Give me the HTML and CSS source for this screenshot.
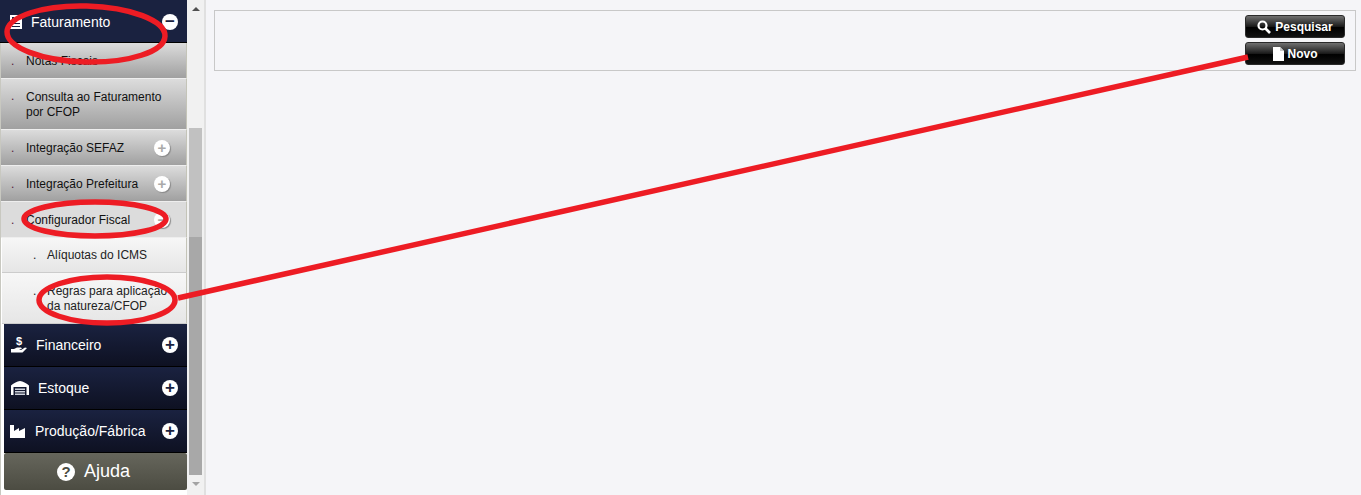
FILE: index.html
```html
<!DOCTYPE html>
<html lang="en">
<head>
  <meta charset="UTF-8" />
  <title>Faturamento</title>
  <link rel="stylesheet" href="styles.css">
</head>
<body>
  <aside class="sidebar">
    <nav class="menu">
      <a class="head head-first">
        <svg class="head-icon" width="12" height="14" viewBox="0 0 12 14"><path fill="#fff" d="M0 0h9l3 3v11H0z"/><path fill="#1a2240" d="M2 2h2v2H2zM5 2h2v2H5zM2 5h2v2H2zM5 5h2v2H5zM2 8h8v1H2zM2 11h8v1H2z"/></svg>
        <span class="head-text">Faturamento</span>
        <span class="toggle">&minus;</span>
      </a>
      <a class="sub">Notas Fiscais</a>
      <a class="sub sub-tall">Consulta ao Faturamento<br>por CFOP</a>
      <a class="sub">Integração SEFAZ<span class="toggle-sm">+</span></a>
      <a class="sub">Integração Prefeitura<span class="toggle-sm">+</span></a>
      <a class="sub sub-open">Configurador Fiscal<span class="toggle-sm">&minus;</span></a>
      <a class="leaf">Alíquotas do ICMS</a>
      <a class="leaf leaf-tall">Regras para aplicação<br>da natureza/CFOP</a>
      <a class="head">
        <svg class="head-icon" width="16" height="18" viewBox="0 0 16 18"><text x="5" y="9" fill="#fff" font-size="11" font-weight="bold" font-family="Liberation Sans">$</text><path fill="#fff" d="M0 13h3l3-1.500h4l1 1-3 1.500h2l4-2.500 2 .5-4.500 4.500H3l-3 0z"/></svg>
        <span class="head-text">Financeiro</span>
        <span class="toggle">+</span>
      </a>
      <a class="head">
        <svg class="head-icon" width="18" height="14" viewBox="0 0 18 14"><path fill="#fff" d="M0 4.500C3 2 6 .5 9 0c3 .5 6 2 9 4.500V14h-2.500V6h-13v8H0z"/><path fill="#cfd3dc" d="M4 7.500h10v1.500H4zM4 10h10v1.500H4zM4 12.500h10V14H4z"/></svg>
        <span class="head-text">Estoque</span>
        <span class="toggle">+</span>
      </a>
      <a class="head">
        <svg class="head-icon head-icon-left" width="15" height="13" viewBox="0 0 15 13"><path fill="#fff" d="M0 0h4v6l5-3v3l6-3v10H0z"/></svg>
        <span class="head-text">Produção/Fábrica</span>
        <span class="toggle">+</span>
      </a>
      <a class="help">
        <span class="help-icon">?</span>
        <span>Ajuda</span>
      </a>
    </nav>
    <div class="scrollbar">
      <span class="arrow arrow-up"></span>
      <span class="thumb"></span>
      <span class="arrow arrow-down"></span>
    </div>
  </aside>

  <main class="content">
    <section class="filter-box">
      <button class="btn">
        <svg width="14" height="14" viewBox="0 0 14 14"><circle cx="5.500" cy="5.500" r="4" fill="none" stroke="#fff" stroke-width="2.200"/><path d="M8.500 8.500L13 13" stroke="#fff" stroke-width="2.600"/></svg>
        Pesquisar
      </button>
      <button class="btn">
        <svg width="11" height="14" viewBox="0 0 11 14"><path fill="#fff" d="M0 0h7l4 4v10H0z"/><path fill="#c8c8c8" d="M7 0l4 4H7z"/></svg>
        Novo
      </button>
    </section>
  </main>

  <!-- marcacoes em vermelho por cima da tela -->
  <svg class="marks" width="1361" height="495" viewBox="0 0 1361 495">
    <g fill="none" stroke="#ed1c24" stroke-width="5.500">
      <ellipse cx="86" cy="34" rx="79" ry="28" transform="rotate(1.500 86 34)"/>
      <ellipse cx="95" cy="219" rx="71" ry="17"/>
      <ellipse cx="107" cy="300" rx="68" ry="23"/>
      <path d="M178 298L1248 57"/>
    </g>
  </svg>
</body>
</html>
```

FILE: styles.css
```css
* {
  box-sizing: border-box;
}

body {
  margin: 0;
  height: 495px;
  overflow: hidden;
  display: flex;
  background: #f5f5f8;
  font-family: 'Liberation Sans', Arial, sans-serif;
}

.sidebar {
  width: 206px;
  height: 495px;
  flex: none;
  display: flex;
  background: #fff;
  border-right: 2px solid #e0e0e0;
}

.menu {
  width: 187px;
  flex: none;
  display: flex;
  flex-direction: column;
  border-left: 1px solid #c8c8c0;
}

.head {
  height: 43px;
  margin-left: 3px;
  display: flex;
  align-items: center;
  gap: 9px;
  padding: 0 9px 0 7px;
  color: #fff;
  font-size: 14px;
  border-bottom: 1px solid #000;
  background: linear-gradient(#1a2240, #0e1122);
}

.head-first {
  margin-left: -1px;
  padding: 2px 9px 0 10px;
  background: #1a2240;
}

.head-icon {
  flex: none;
}

.head-icon-left {
  margin: 0 1px 0 -1px;
}

.head-text {
  flex: 1;
}

.toggle {
  width: 16px;
  height: 16px;
  border-radius: 50%;
  background: #fff;
  color: #1a2240;
  font-size: 17px;
  font-weight: bold;
  line-height: 16px;
  text-align: center;
}

.sub {
  height: 36px;
  display: flex;
  align-items: center;
  justify-content: space-between;
  position: relative;
  padding: 0 16px 0 25px;
  color: #111;
  font-size: 12px;
  border-bottom: 1px solid #eee;
  border-right: 1px solid #c4c4b8;
  background: linear-gradient(#dcdcdc, #a0a0a0);
}

.sub::before {
  content: ".";
  position: absolute;
  left: 10px;
  color: #55203a;
}

.sub-tall {
  height: 51px;
  padding-top: 2px;
  line-height: 15px;
}

.sub-tall::before {
  top: 10px;
}

.sub-open {
  background: #dcdcdc;
}

.toggle-sm {
  width: 16px;
  height: 16px;
  border-radius: 50%;
  background: #fff;
  color: #aaa;
  font-size: 15px;
  font-weight: bold;
  line-height: 16px;
  text-align: center;
  box-shadow: 1px 1px 1px #888;
}

.leaf {
  height: 35px;
  margin-left: 1px;
  display: flex;
  align-items: center;
  position: relative;
  padding-left: 45px;
  color: #222;
  font-size: 12px;
  border-bottom: 1px solid #ccc;
  border-right: 1px solid #c4c4b8;
  background: linear-gradient(#f7f7f7, #e6e6e6);
}

.leaf::before {
  content: ".";
  position: absolute;
  left: 31px;
}

.leaf-tall {
  height: 51px;
  padding-top: 2px;
  line-height: 15px;
}

.leaf-tall::before {
  top: 11px;
}

.help {
  height: 37px;
  margin-left: 3px;
  display: flex;
  align-items: center;
  justify-content: center;
  gap: 9px;
  padding-right: 4px;
  color: #fff;
  font-size: 18px;
  border-radius: 2px;
  background: linear-gradient(#66665c, #4c4c42);
}

.help-icon {
  width: 18px;
  height: 18px;
  border-radius: 50%;
  background: #fff;
  color: #4c4c42;
  font-size: 15px;
  font-weight: bold;
  line-height: 18px;
  text-align: center;
}

.scrollbar {
  width: 17px;
  flex: none;
  display: flex;
  flex-direction: column;
  align-items: center;
  padding: 0 2px;
  background: #f1f1f1;
}

.arrow {
  height: 17px;
  flex: none;
}

.arrow-up::after,
.arrow-down::after {
  content: "";
  display: block;
  margin-top: 7px;
  border: 4px solid transparent;
  border-top: 0;
  border-bottom: 4px solid #505050;
}

.arrow-down::after {
  border-bottom: 0;
  border-top: 4px solid #a3a3a3;
}

.thumb {
  width: 100%;
  height: 347px;
  margin-top: 111px;
  flex: none;
  background: linear-gradient(#c1c1c1 0, #c1c1c1 109px, #a8a8a8 109px);
}

.content {
  flex: 1;
  padding: 10px 5px 0 8px;
}

.filter-box {
  height: 61px;
  display: flex;
  flex-direction: column;
  align-items: flex-end;
  gap: 4px;
  padding: 4px 10px 0 0;
  border: 1px solid #c8c8c8;
}

.btn {
  width: 100px;
  height: 23px;
  flex: none;
  display: flex;
  align-items: center;
  justify-content: center;
  gap: 4px;
  padding: 0;
  color: #fff;
  font-family: inherit;
  font-size: 12px;
  font-weight: bold;
  border: 1px solid #2a2a2a;
  border-radius: 3px;
  background: linear-gradient(#707070, #1a1a1a 50%, #000 55%, #111);
}

.marks {
  position: absolute;
  top: 0;
  left: 0;
  pointer-events: none;
}
```
